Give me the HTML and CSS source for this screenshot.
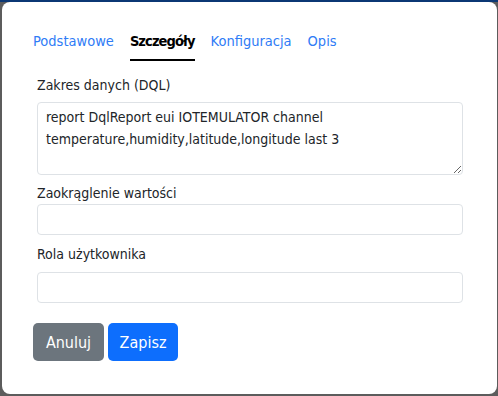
FILE: index.html
```html
<html>

<head>
	<meta charset="utf-8">
	<title>Szczegóły raportu</title>
	<link rel="stylesheet" href="styles.css">
</head>

<body>
	<div class="modal">
		<ul class="tabs">
			<li><a href="#">Podstawowe</a></li>
			<li><a href="#" class="active">Szczegóły</a></li>
			<li><a href="#">Konfiguracja</a></li>
			<li><a href="#">Opis</a></li>
		</ul>

		<form class="form">
			<label for="dql" class="label-dql">Zakres danych (DQL)</label>
			<textarea id="dql" rows="3">report DqlReport eui IOTEMULATOR channel temperature,humidity,latitude,longitude last 3</textarea>

			<label for="rounding" class="label-rounding">Zaokrąglenie wartości</label>
			<input id="rounding" type="text">

			<label for="role" class="label-role">Rola użytkownika</label>
			<input id="role" type="text">
		</form>

		<div class="buttons">
			<button class="btn btn-cancel">Anuluj</button>
			<button class="btn btn-save">Zapisz</button>
		</div>
	</div>
</body>

</html>
```

FILE: styles.css
```css
body {
	font-family: "DejaVu Sans Condensed", "DejaVu Sans", sans-serif;
	font-size: 14px;
	color: #212529;
	margin: 0;
	padding: 2px 0 0 2px;
	height: 396px;
	box-sizing: border-box;
	overflow: hidden;
	background: linear-gradient(#0b3774 0, #0b3774 2px, #5c5c5c 2px);
}

.modal {
	width: 495px;
	height: 392px;
	background-color: #fff;
	border-radius: 8px;
	padding: 29px 0 0 31px;
	box-sizing: border-box;
}

.tabs {
	display: flex;
	gap: 16px;
	list-style: none;
	margin: 0;
	padding: 0;
}

.tabs a {
	display: block;
	color: #2f7cf6;
	font-size: 14.5px;
	text-decoration: none;
	line-height: 20px;
	padding-bottom: 8px;
	border-bottom: 2px solid transparent;
}

.tabs a.active {
	color: #000;
	font-weight: bold;
	letter-spacing: -0.9px;
	border-bottom-color: #000;
}

.form {
	display: flex;
	flex-direction: column;
	width: 426px;
	margin: 14px 0 0 4px;
}

label {
	line-height: 20px;
}

.label-dql {
	margin-bottom: 7px;
}

.label-rounding {
	margin-top: 8px;
	margin-bottom: 1px;
}

.label-role {
	margin-top: 9px;
	margin-bottom: 8px;
}

textarea,
input {
	font-family: inherit;
	font-size: inherit;
	color: #212529;
	border: 1px solid #dee2e6;
	border-radius: 4px;
	box-sizing: border-box;
	margin: 0;
}

textarea {
	height: 73px;
	padding: 3px 8px;
	line-height: 22px;
	resize: vertical;
}

input {
	height: 31px;
	padding: 4px 8px;
}

.buttons {
	display: flex;
	gap: 4px;
	margin-top: 20px;
}

.btn {
	font-family: inherit;
	font-size: 16px;
	color: #fff;
	border: none;
	border-radius: 5px;
	height: 38px;
	padding: 0;
	cursor: pointer;
}

.btn-cancel {
	background-color: #6c757d;
	width: 71px;
}

.btn-save {
	background-color: #0d6efd;
	width: 70px;
}
```
